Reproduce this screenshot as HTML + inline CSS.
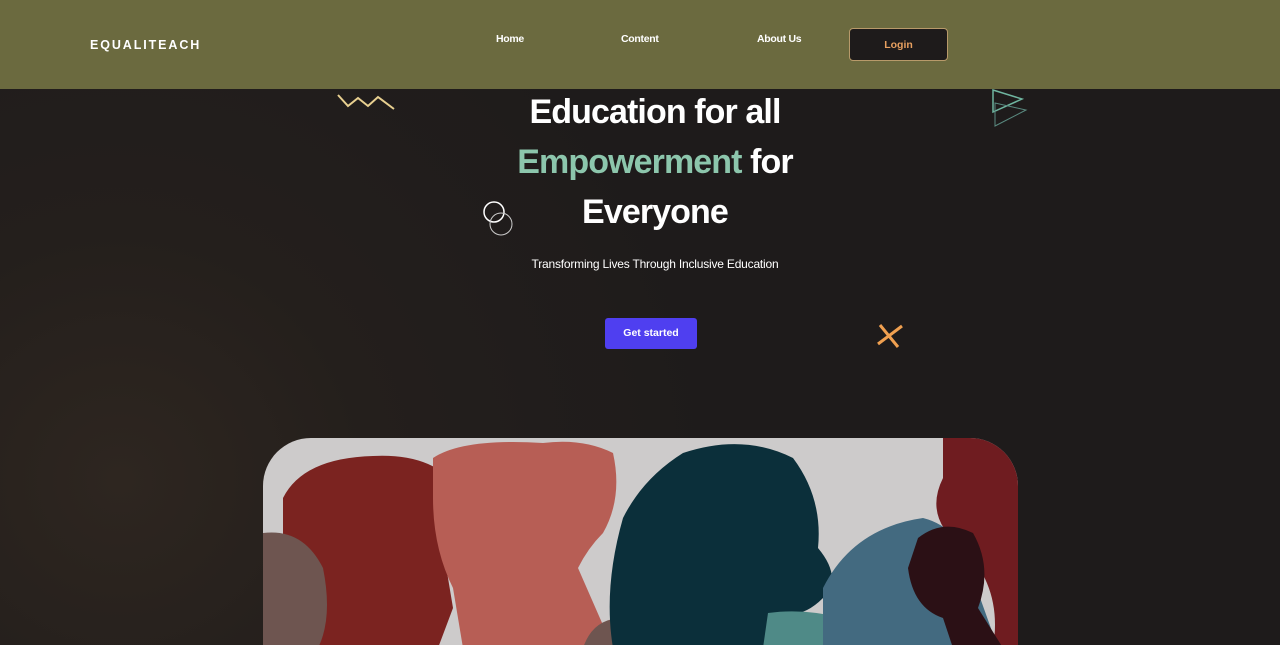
<!DOCTYPE html>
<html><head><meta charset="utf-8"><style>
*{margin:0;padding:0;box-sizing:border-box}
body{width:1280px;height:645px;overflow:hidden;font-family:"Liberation Sans",sans-serif;background:radial-gradient(circle at 120px 480px,#2e2620 0,#241f1c 250px,#1e1b1b 600px);position:relative}
.hdr{position:absolute;left:0;top:0;width:1280px;height:89px;background:#6b6a3f}
.logo{position:absolute;left:90px;top:38px;color:#fff;font-weight:bold;font-size:12.5px;letter-spacing:1.9px}
.nav{position:absolute;top:33px;color:#fff;font-weight:bold;font-size:10.5px;letter-spacing:-0.3px}
.login{position:absolute;left:849px;top:28px;width:99px;height:33px;background:#1e1b1b;border:1px solid #b89a6a;border-radius:4px;color:#e8a060;font-weight:bold;font-size:10.5px;text-align:center;line-height:32px}
h1{position:absolute;left:0;width:1310px;text-align:center;color:#fff;font-size:34px;font-weight:bold;letter-spacing:-0.9px}
.sub{position:absolute;left:0;width:1310px;top:257px;text-align:center;color:#fff;font-size:12px;letter-spacing:-0.2px}
.btn{position:absolute;left:605px;top:318px;width:92px;height:31px;background:#4f3ff0;border-radius:3px;color:#fff;font-weight:bold;font-size:10.5px;text-align:center;line-height:31px}
.img{position:absolute;left:263px;top:438px;width:755px;height:207px;border-radius:48px 48px 0 0;overflow:hidden;background:#cdcbcb}
</style></head><body>
<div class="hdr">
<div class="logo">EQUALITEACH</div>
<div class="nav" style="left:496px">Home</div>
<div class="nav" style="left:621px">Content</div>
<div class="nav" style="left:757px">About Us</div>
<div class="login">Login</div>
</div>
<svg style="position:absolute;left:0;top:0" width="1280" height="400">
<polyline points="338,95 348,106 358,98 368,106 378,97 394,109" fill="none" stroke="#e8d090" stroke-width="2"/>
<polygon points="993,90 1022,99 993,112" fill="none" stroke="#6fb5a0" stroke-width="1.5"/>
<polygon points="995,103 1026,110 995,126" fill="none" stroke="#5a8a80" stroke-width="1"/>
<circle cx="494" cy="212" r="10" fill="none" stroke="#fff" stroke-width="1.5"/>
<circle cx="501" cy="224" r="11" fill="none" stroke="#ccc" stroke-width="1"/>
<line x1="880" y1="325" x2="898" y2="347" stroke="#f0a050" stroke-width="3"/>
<line x1="902" y1="326" x2="878" y2="344" stroke="#f0a050" stroke-width="3"/>
</svg>
<h1 style="top:93px">Education for all</h1>
<h1 style="top:143px"><span style="color:#8cc6ac">Empowerment</span> for</h1>
<h1 style="top:193px">Everyone</h1>
<div class="sub">Transforming Lives Through Inclusive Education</div>
<div class="btn">Get started</div>
<div class="img"><svg width="755" height="210">
<path d="M20 60 Q40 20 110 18 Q170 15 195 50 Q205 80 180 110 L190 170 L175 210 L20 210 Z" fill="#7b2320"/>
<path d="M0 95 Q40 90 60 130 Q70 180 55 210 L0 210 Z" fill="#6e5550"/>
<path d="M170 20 Q200 0 280 5 Q320 0 350 15 Q360 60 340 95 Q325 110 315 130 L350 210 L200 210 L190 150 Q170 110 170 60 Z" fill="#b75e55"/>
<path d="M320 210 Q330 180 360 180 Q380 190 385 210 Z" fill="#6e5550"/>
<path d="M360 80 Q380 40 420 15 Q480 -5 530 20 Q560 60 555 110 Q580 140 560 160 Q540 180 520 175 L535 210 L350 210 Q340 150 360 80 Z" fill="#0b2f3a"/>
<path d="M500 210 L505 175 Q540 170 580 180 L585 210 Z" fill="#4f8a87"/>
<path d="M560 150 Q590 90 660 80 Q700 90 710 140 L735 210 L560 210 Z" fill="#436a80"/>
<path d="M680 0 L755 0 L755 210 L730 210 Q740 150 700 110 Q660 80 680 40 Z" fill="#6f1c20"/>
<path d="M655 100 Q680 80 710 95 Q730 130 715 170 L740 210 L690 210 L680 180 Q650 170 645 130 Z" fill="#2b1015"/>
</svg></div>
</body></html>
